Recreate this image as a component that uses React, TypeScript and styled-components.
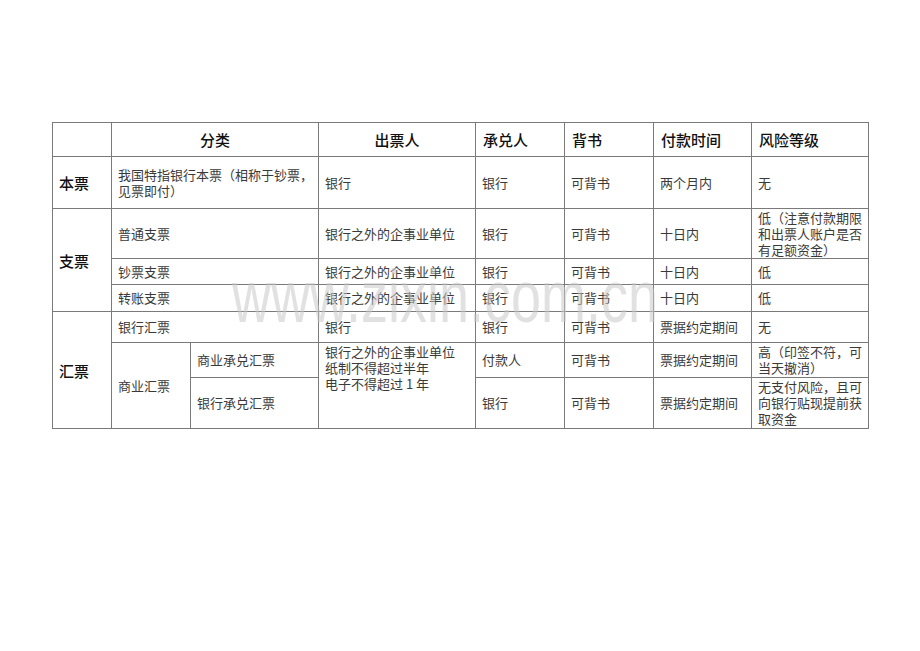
import styled, { createGlobalStyle } from "styled-components"

const GlobalStyle = createGlobalStyle`
  body {
    margin: 0;
    background: #ffffff;
  }
`

const Page = styled.div`
  position: relative;
  width: 920px;
  height: 651px;
  padding: 122px 0 0 52px;
  box-sizing: border-box;
  overflow: hidden;
`

const Table = styled.table`
  width: 816px;
  border-collapse: collapse;
  table-layout: fixed;
  font-family: "Noto Sans CJK SC", "Liberation Serif", serif;
`

const Row = styled.tr<{ $h: number }>`
  height: ${p => p.$h}px;
`

const Head = styled.th<{ $center?: boolean }>`
  border: 1px solid #7a7a7a;
  font-size: 15px;
  font-weight: 500;
  color: #111;
  text-align: ${p => (p.$center ? "center" : "left")};
  padding: 0 7px;
  vertical-align: middle;
`

const Label = styled.td`
  border: 1px solid #7a7a7a;
  font-size: 15px;
  font-weight: 500;
  color: #111;
  padding: 0 6px;
  vertical-align: middle;
`

const Cell = styled.td<{ $top?: boolean }>`
  border: 1px solid #7a7a7a;
  font-size: 13px;
  line-height: 16px;
  color: #3a3a3a;
  padding: ${p => (p.$top ? "1px 6px 0" : "0 6px")};
  vertical-align: ${p => (p.$top ? "top" : "middle")};
  white-space: nowrap;
`

const Watermark = styled.div`
  position: absolute;
  left: 232px;
  top: 256px;
  font-family: "Liberation Sans", Arial, sans-serif;
  font-size: 75px;
  line-height: 80px;
  color: rgba(200, 200, 200, 0.55);
  transform: scaleX(0.72);
  transform-origin: left top;
  pointer-events: none;
  white-space: nowrap;
`

const widths = [59, 79, 128, 157, 89, 89, 98, 117]

export default function App() {
  return (
    <Page>
      <GlobalStyle />
      <Table>
        <colgroup>
          {widths.map((w, i) => (
            <col key={i} style={{ width: w }} />
          ))}
        </colgroup>
        <tbody>
          <Row $h={34}>
            <Head />
            <Head colSpan={2} $center>分类</Head>
            <Head $center>出票人</Head>
            <Head>承兑人</Head>
            <Head>背书</Head>
            <Head>付款时间</Head>
            <Head>风险等级</Head>
          </Row>
          <Row $h={52}>
            <Label>本票</Label>
            <Cell colSpan={2}>
              我国特指银行本票（相称于钞票，
              <br />
              见票即付）
            </Cell>
            <Cell>银行</Cell>
            <Cell>银行</Cell>
            <Cell>可背书</Cell>
            <Cell>两个月内</Cell>
            <Cell>无</Cell>
          </Row>
          <Row $h={50}>
            <Label rowSpan={3}>支票</Label>
            <Cell colSpan={2}>普通支票</Cell>
            <Cell>银行之外的企事业单位</Cell>
            <Cell>银行</Cell>
            <Cell>可背书</Cell>
            <Cell>十日内</Cell>
            <Cell>
              低（注意付款期限
              <br />
              和出票人账户是否
              <br />
              有足额资金）
            </Cell>
          </Row>
          <Row $h={26}>
            <Cell colSpan={2}>钞票支票</Cell>
            <Cell>银行之外的企事业单位</Cell>
            <Cell>银行</Cell>
            <Cell>可背书</Cell>
            <Cell>十日内</Cell>
            <Cell>低</Cell>
          </Row>
          <Row $h={27}>
            <Cell colSpan={2}>转账支票</Cell>
            <Cell>银行之外的企事业单位</Cell>
            <Cell>银行</Cell>
            <Cell>可背书</Cell>
            <Cell>十日内</Cell>
            <Cell>低</Cell>
          </Row>
          <Row $h={31}>
            <Label rowSpan={3}>汇票</Label>
            <Cell colSpan={2}>银行汇票</Cell>
            <Cell>银行</Cell>
            <Cell>银行</Cell>
            <Cell>可背书</Cell>
            <Cell>票据约定期间</Cell>
            <Cell>无</Cell>
          </Row>
          <Row $h={35}>
            <Cell rowSpan={2}>商业汇票</Cell>
            <Cell>商业承兑汇票</Cell>
            <Cell rowSpan={2} $top>
              银行之外的企事业单位
              <br />
              纸制不得超过半年
              <br />
              电子不得超过 1 年
            </Cell>
            <Cell>付款人</Cell>
            <Cell>可背书</Cell>
            <Cell>票据约定期间</Cell>
            <Cell>
              高（印签不符，可
              <br />
              当天撤消）
            </Cell>
          </Row>
          <Row $h={51}>
            <Cell>银行承兑汇票</Cell>
            <Cell>银行</Cell>
            <Cell>可背书</Cell>
            <Cell>票据约定期间</Cell>
            <Cell>
              无支付风险，且可
              <br />
              向银行贴现提前获
              <br />
              取资金
            </Cell>
          </Row>
        </tbody>
      </Table>
      <Watermark>www.zixin.com.cn</Watermark>
    </Page>
  )
}
